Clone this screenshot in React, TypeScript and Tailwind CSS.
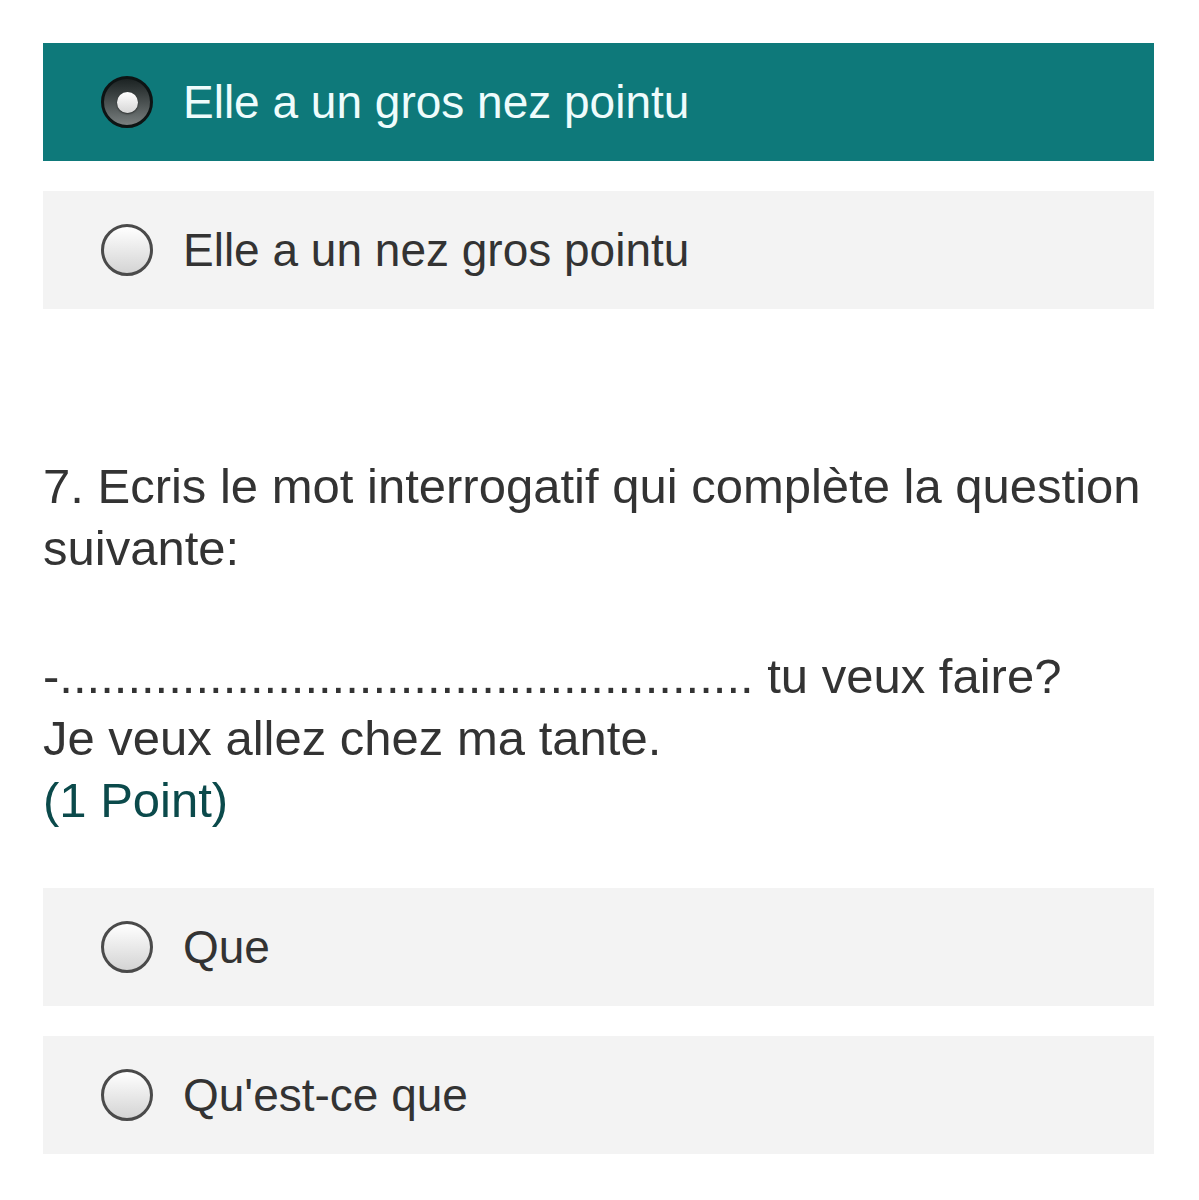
import React from "react";

type Option = { label: string; selected?: boolean };

function Radio({ selected }: { selected?: boolean }) {
  if (selected) {
    return (
      <span className="flex h-[52px] w-[52px] shrink-0 items-center justify-center rounded-full border-[3px] border-[#0d1414] bg-gradient-to-b from-[#1c2323] to-[#7a8080]">
        <span className="h-[21px] w-[21px] rounded-full bg-gradient-to-b from-white to-[#d6d6d6] shadow-[0_1px_2px_rgba(0,0,0,0.6)]" />
      </span>
    );
  }
  return (
    <span className="h-[52px] w-[52px] shrink-0 rounded-full border-[3px] border-[#4a4a4a] bg-gradient-to-b from-white to-[#d4d4d4]" />
  );
}

function Choice({ label, selected }: Option) {
  return (
    <label
      className={`flex h-[118px] items-center gap-[30px] pl-[58px] text-[46px] ${
        selected ? "bg-[#0e797a] text-[#effcfc]" : "bg-[#f3f3f3] text-[#333333]"
      }`}
    >
      <Radio selected={selected} />
      <span>{label}</span>
    </label>
  );
}

export default function App() {
  const dots = ".".repeat(51);
  return (
    <div className="min-h-[1200px] bg-white pl-[43px] pr-[45px] pt-[43px] pb-[44px] font-['Liberation_Sans',Arial,sans-serif] text-[#333333]">
      <div className="flex flex-col gap-[30px]">
        <Choice label="Elle a un gros nez pointu" selected />
        <Choice label="Elle a un nez gros pointu" />
      </div>

      <div className="mt-[146px] text-[49px] leading-[62px]">
        <p>7. Ecris le mot interrogatif qui complète la question suivante:</p>
        <p className="mt-[66px]">
          -{dots} tu veux faire?
          <br />
          Je veux allez chez ma tante.
        </p>
        <p className="text-[#0b4a4b]">(1 Point)</p>
      </div>

      <div className="mt-[57px] flex flex-col gap-[30px]">
        <Choice label="Que" />
        <Choice label="Qu'est-ce que" />
      </div>
    </div>
  );
}
